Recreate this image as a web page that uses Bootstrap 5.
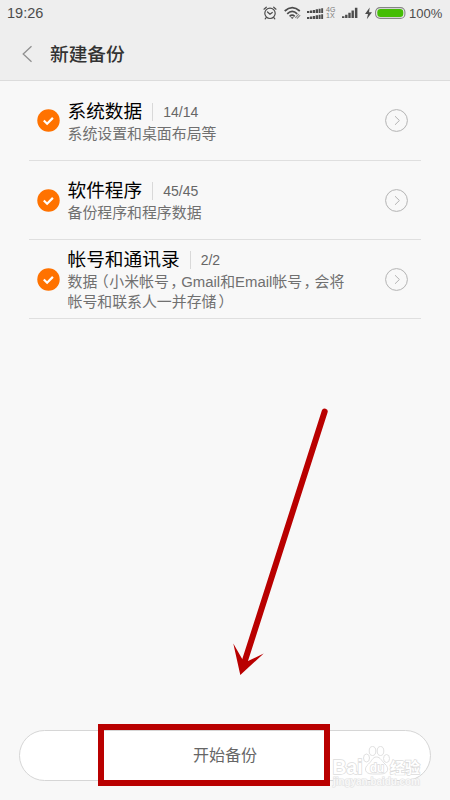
<!DOCTYPE html>
<html lang="zh-CN">
<head>
<meta charset="utf-8">
<meta name="viewport" content="width=device-width, initial-scale=1">
<title>新建备份</title>
<link href="https://cdn.jsdelivr.net/npm/bootstrap@5.3.0/dist/css/bootstrap.min.css" rel="stylesheet">
<style>
body{background:#f8f8f8;font-family:"Liberation Sans","Noto Sans CJK SC",sans-serif;color:#000;overflow:hidden}
svg{display:block;flex:none}
.screen{width:450px;height:800px}
.top-area{height:81px;background:#eee;border-bottom:1px solid #dcdcdc}
.status{height:26px;padding:0 7px 0 7px;font-size:14.5px;color:#4c4c4c}
.clock{padding-top:2px}
.pct{font-size:13px;width:34px;margin-left:3px;white-space:nowrap;padding-top:1px}
.net{font-size:7px;line-height:6.5px;width:10px;color:#777;margin:0 6px 0 2px}
.titlebar{height:55px;padding-left:20px;font-size:18.7px;font-weight:500;color:#333}
.titlebar span{margin-left:15px;padding-top:3px}
.rows{margin:0 29px}
.item{height:79px;border-bottom:1px solid #dfdfdf;padding:0 13px 0 8px}
.item:first-child{height:80px}
.words{margin-left:7.5px;padding-top:3px}
.name{font-size:18.7px;line-height:22px}
.bar{width:1px;height:18px;background:#d9d9d9;margin:0 10px}
.count{font-size:14px;color:#666}
.desc{font-size:14.9px;line-height:20px;color:#707070;white-space:nowrap;padding-top:1px}
.half{font-feature-settings:"halt"}
.open{margin-left:4px;margin-right:.5px}
.comma{margin:0 3.5px 0 1.5px}
.close-p{margin-left:2px}
.start{margin:0 19px 19px;height:51px;border:1px solid #d6d6d6;border-radius:26px;background:#fff;font-size:16px;color:#666}
.frame{left:98px;top:724px;width:232px;height:62px;border:6px solid #b90000}
.arrow{left:220px;top:400px}
.wm{left:328px;top:740px}
.wm text{paint-order:stroke}
</style>
<script src="https://cdn.jsdelivr.net/npm/bootstrap@5.3.0/dist/js/bootstrap.bundle.min.js"></script>
</head>
<body>
<div class="screen d-flex flex-column position-relative">
  <header class="top-area">
    <div class="status d-flex align-items-center">
      <span class="clock me-auto">19:26</span>
      <svg width="14" height="14" viewBox="0 0 14 14" fill="none" stroke="#4c4c4c" stroke-width="1.2" stroke-linecap="round"><circle cx="7" cy="7.3" r="5.2"/><path d="M1 3.2 3.3 1.2M13 3.2 10.7 1.2M4.5 6 7 8.3 9.3 6.5M3.2 11.7l-1 1.2M10.8 11.7l1 1.2"/></svg>
      <svg style="margin-left:7px" width="17" height="14" viewBox="0 0 17 14" fill="none" stroke="#4c4c4c" stroke-width="1.7"><path d="M.7 5Q8.2-1.8 15.8 5M3.2 7.8Q8.2 3.1 13.2 7.8M5.6 10.3Q8.2 8 10.7 10.3"/><path d="M6.5 11.3h3.4L8.2 13z" fill="#4c4c4c" stroke="none"/><path d="m11.3 11.8 3.5-3.6M12.9 12.6l3.3-3.4" stroke="#888" stroke-width="1.1"/></svg>
      <svg style="margin-left:6px" width="17" height="13" viewBox="0 0 17 13" fill="#4c4c4c"><path d="M0 4.1h2.3V6H0zM2.9 3.5h2.3V6H2.9zM5.8 2.9h2.3V6H5.8zM8.7 2.3H11V6H8.7zM11.6 1.7h2V6h-2zM14.2 1.2h1.9V6h-1.9zM0 10.1h2.3V12H0zM2.9 9.5h2.3V12H2.9zM5.8 8.9h2.3V12H5.8zM8.7 8.3H11V12H8.7zM11.6 7.7h2V12h-2zM14.2 7.2h1.9V12h-1.9z"/></svg>
      <span class="net">4G<br>1X</span>
      <svg width="17" height="12" viewBox="0 0 17 12" fill="#4c4c4c"><path d="M0 9.3h2.4V11H0zM3.1 7.7h2.4V11H3.1zM6.3 5.7h2.4V11H6.3zM9.5 3.4h2.4V11H9.5zM12.9.8h2.5V11h-2.5z"/></svg>
      <svg style="margin-left:6px" width="7" height="13" viewBox="0 0 7 13" fill="#4c4c4c"><path d="M4.7.5 0 7h3L1.8 12.3 7 5.2H4z"/></svg>
      <svg style="margin-left:3px" width="31" height="12" viewBox="0 0 31 12"><rect x=".6" y=".6" width="29.3" height="10.8" rx="4.5" fill="#eee" stroke="#858585" stroke-width="1.1"/><rect x="2.3" y="2.1" width="26" height="7.8" rx="3.2" fill="#45bd05"/></svg>
      <span class="pct">100%</span>
    </div>
    <div class="titlebar d-flex align-items-center">
      <svg width="15" height="18" viewBox="0 0 15 18" fill="none" stroke="#909090" stroke-width="1.3"><path d="M11.5 1.2 3.2 9l8.3 7.8"/></svg>
      <span>新建备份</span>
    </div>
  </header>

  <main class="rows flex-grow-1">
    <div class="item d-flex align-items-center">
      <svg width="23" height="23" viewBox="0 0 23 23"><circle cx="11.5" cy="11.5" r="11.2" fill="#ff7200"/><path d="m6.8 11.5 3.3 3.2 5.8-5.8" fill="none" stroke="#fff" stroke-width="2.2"/></svg>
      <div class="words me-auto">
        <div class="name d-flex align-items-center">系统数据<i class="bar"></i><span class="count">14/14</span></div>
        <div class="desc">系统设置和桌面布局等</div>
      </div>
      <svg width="23" height="23" viewBox="0 0 23 23" fill="none" stroke="#b3b3b3"><circle cx="11.5" cy="11.5" r="10.9"/><path d="m10 7.2 4.4 4.3-4.4 4.3"/></svg>
    </div>
    <div class="item d-flex align-items-center">
      <svg width="23" height="23" viewBox="0 0 23 23"><circle cx="11.5" cy="11.5" r="11.2" fill="#ff7200"/><path d="m6.8 11.5 3.3 3.2 5.8-5.8" fill="none" stroke="#fff" stroke-width="2.2"/></svg>
      <div class="words me-auto">
        <div class="name d-flex align-items-center">软件程序<i class="bar"></i><span class="count">45/45</span></div>
        <div class="desc">备份程序和程序数据</div>
      </div>
      <svg width="23" height="23" viewBox="0 0 23 23" fill="none" stroke="#b3b3b3"><circle cx="11.5" cy="11.5" r="10.9"/><path d="m10 7.2 4.4 4.3-4.4 4.3"/></svg>
    </div>
    <div class="item d-flex align-items-center">
      <svg width="23" height="23" viewBox="0 0 23 23"><circle cx="11.5" cy="11.5" r="11.2" fill="#ff7200"/><path d="m6.8 11.5 3.3 3.2 5.8-5.8" fill="none" stroke="#fff" stroke-width="2.2"/></svg>
      <div class="words me-auto">
        <div class="name d-flex align-items-center">帐号和通讯录<i class="bar"></i><span class="count">2/2</span></div>
        <div class="desc">数据<span class="half open">（</span>小米帐号<span class="half comma">，</span>Gmail和Email帐号<span class="half comma">，</span>会将<br>帐号和联系人一并存储<span class="half close-p">）</span></div>
      </div>
      <svg width="23" height="23" viewBox="0 0 23 23" fill="none" stroke="#b3b3b3"><circle cx="11.5" cy="11.5" r="10.9"/><path d="m10 7.2 4.4 4.3-4.4 4.3"/></svg>
    </div>
  </main>

  <button type="button" class="start d-flex align-items-center justify-content-center p-0">开始备份</button>

  <svg class="wm position-absolute" width="100" height="52" viewBox="0 0 100 52" fill="#fff" stroke="#dcdcdc" stroke-width=".9" font-family="Liberation Sans, Noto Sans CJK SC, sans-serif" font-weight="700">
    <text x="4.500" y="34" font-size="20" stroke-width="1.500" textLength="30" lengthAdjust="spacingAndGlyphs">Bai</text>
    <ellipse cx="38.500" cy="18" rx="3" ry="4"/><ellipse cx="44.500" cy="11" rx="3.300" ry="4.500"/><ellipse cx="52.500" cy="11" rx="3.300" ry="4.500"/><ellipse cx="58.500" cy="18.500" rx="3" ry="4"/>
    <path d="M48.500 17c-4 0-4.500 4-8 7-5 4-4 10 4 10h8c8 0 9-6 4.500-10-3.500-3-4.500-7-8.500-7z"/>
    <text x="42" y="32" font-size="12" stroke-width="1.400" textLength="14" lengthAdjust="spacingAndGlyphs">du</text>
    <text x="62" y="33" font-size="15" stroke-width="1.400" textLength="30">经验</text>
    <text x="5" y="45" font-size="10" textLength="87" stroke="#e2e2e2" stroke-width="1.200" fill="#f8f8f8">jingyan.baidu.com</text>
  </svg>
  <div class="frame position-absolute"></div>
  <svg class="arrow position-absolute" width="120" height="290" viewBox="0 0 120 290"><path d="M104.700 11.500 24.500 262" stroke="#b90000" stroke-width="6" stroke-linecap="round"/><path d="M13.300 243.500 22.500 259.500 28 261 43.700 253.500 20.300 275z" fill="#b90000"/></svg>
</div>
</body>
</html>
